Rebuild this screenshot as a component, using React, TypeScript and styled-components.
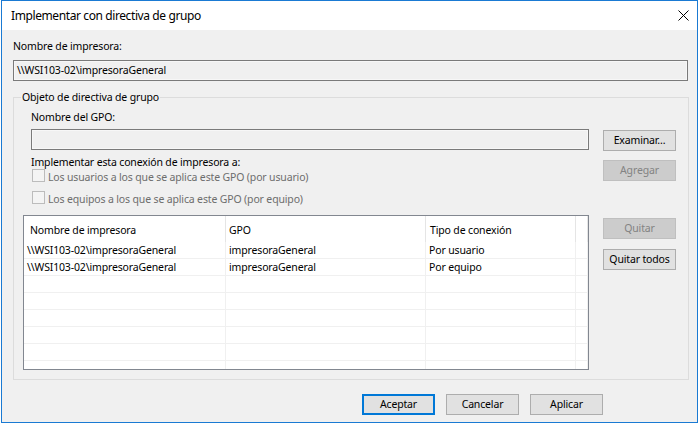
import React from "react"
import styled, { createGlobalStyle, css } from "styled-components"

const GlobalStyle = createGlobalStyle`
  html, body {
    margin: 0;
    padding: 0;
    background: #fff;
  }
  body {
    font-family: "Segoe UI", "Noto Sans", sans-serif;
    font-size: 10.5px;
    letter-spacing: -0.15px;
    color: #000;
  }
`

const Window = styled.div`
  margin-left: 1px;
  width: 697px;
  height: 423px;
  box-sizing: border-box;
  border: 1px solid #1a7ad3;
  background: #f0f0f0;
  display: flex;
  flex-direction: column;
`

const TitleBar = styled.div`
  height: 29px;
  flex: none;
  background: #fff;
  display: flex;
  align-items: center;
  justify-content: space-between;
  padding: 0 8px 0 9px;
  line-height: 15px;
`

const Title = styled.span`
  font-size: 12px;
  letter-spacing: -0.4px;
`

const Body = styled.div`
  flex: 1;
  display: flex;
  flex-direction: column;
  padding: 9px 0 0 11px;
`

const Label = styled.div<{ $indent?: number }>`
  line-height: 15px;
  padding-left: ${p => p.$indent ?? 0}px;
  white-space: nowrap;
`

const TextBox = styled.div<{ $width: number; $top: number; $indent?: number }>`
  width: ${p => p.$width}px;
  height: 21px;
  margin-top: ${p => p.$top}px;
  margin-left: ${p => p.$indent ?? 0}px;
  box-sizing: border-box;
  border: 1px solid #7a7a7a;
  box-shadow: inset 0 0 0 1px #f7f7f7;
  background: #f0f0f0;
  line-height: 18px;
  padding-left: 3px;
  white-space: nowrap;
`

const Group = styled.fieldset`
  margin: 9px 0 0;
  width: 676px;
  min-width: 0;
  box-sizing: border-box;
  border: 1px solid #dcdcdc;
  padding: 5px 11px 9px 9px;
`

const Legend = styled.legend`
  padding: 0 1px;
  margin-left: -2px;
  line-height: 15px;
`

const GroupGrid = styled.div`
  display: grid;
  grid-template-columns: 566px 74px;
  column-gap: 14px;
  align-items: start;
`

const SideButtons = styled.div`
  display: flex;
  flex-direction: column;
  align-items: flex-start;
`

const buttonKinds = {
  normal: css`
    background: #e1e1e1;
    border: 1px solid #adadad;
    color: #000;
  `,
  default: css`
    background: #e1e1e1;
    border: 2px solid #0078d7;
    color: #000;
  `,
  disabled: css`
    background: #cccccc;
    border: 1px solid #bfbfbf;
    color: #838383;
  `,
}

const Button = styled.button<{ $kind?: keyof typeof buttonKinds; $top?: number }>`
  width: 73px;
  height: 21px;
  margin-top: ${p => p.$top ?? 0}px;
  box-sizing: border-box;
  padding: 0;
  font: inherit;
  letter-spacing: inherit;
  line-height: 15px;
  white-space: nowrap;
  ${p => buttonKinds[p.$kind ?? "normal"]}
`

const Options = styled.div`
  margin-top: 4px;
  display: flex;
  flex-direction: column;
`

const CheckList = styled.div`
  padding-left: 9px;
  display: flex;
  flex-direction: column;
  gap: 7px;
`

const CheckRow = styled.label`
  display: flex;
  align-items: flex-start;
  gap: 3px;
  line-height: 15px;
  color: #6d6d6d;
  white-space: nowrap;
`

const CheckBox = styled.span`
  width: 13px;
  height: 13px;
  margin-top: -1px;
  box-sizing: border-box;
  border: 1px solid #bcbcbc;
  background: #f4f4f4;
  flex: none;
`

const ListView = styled.div`
  margin-top: 8px;
  width: 566px;
  height: 155px;
  box-sizing: border-box;
  border: 1px solid #828790;
  background: #fff;
  overflow: hidden;
`

const Row = styled.div<{ $header?: boolean }>`
  display: grid;
  grid-template-columns: 202px 200px 150px 1fr;
  height: ${p => (p.$header ? 26 : 17)}px;
  box-sizing: border-box;
  border-bottom: ${p => (p.$header ? "none" : "1px solid #f0f0f0")};
`

const Cell = styled.div<{ $header?: boolean; $pad: number }>`
  border-right: 1px solid ${p => (p.$header ? "#e5e5e5" : "#f0f0f0")};
  padding: ${p => (p.$header ? 7 : 1)}px 0 0 ${p => p.$pad}px;
  line-height: 15px;
  white-space: nowrap;
  overflow: hidden;
`

const Footer = styled.div`
  margin-top: 14px;
  display: flex;
  justify-content: flex-end;
  gap: 11px;
  padding-right: 94px;
`

const CloseIcon = () => (
  <svg width="11" height="11" viewBox="0 0 11 11" style={{ display: "block" }}>
    <path d="M0.5 0.5 L10.5 10.5 M10.5 0.5 L0.5 10.5" stroke="#000" strokeWidth="1" fill="none" />
  </svg>
)

const printer = "\\\\WSI103-02\\impresoraGeneral"

const columns = [
  { title: "Nombre de impresora", head: 6, body: 3 },
  { title: "GPO", head: 3, body: 3 },
  { title: "Tipo de conexión", head: 4, body: 3 },
]

const rows = [
  [printer, "impresoraGeneral", "Por usuario"],
  [printer, "impresoraGeneral", "Por equipo"],
  ["", "", ""],
  ["", "", ""],
  ["", "", ""],
  ["", "", ""],
  ["", "", ""],
  ["", "", ""],
]

export default function App() {
  return (
    <>
      <GlobalStyle />
      <Window>
        <TitleBar>
          <Title>Implementar con directiva de grupo</Title>
          <CloseIcon />
        </TitleBar>
        <Body>
          <Label>Nombre de impresora:</Label>
          <TextBox $width={675} $top={6}>{printer}</TextBox>
          <Group>
            <Legend>Objeto de directiva de grupo</Legend>
            <GroupGrid>
              <Label $indent={8}>Nombre del GPO:</Label>
              <div />
              <TextBox $width={558} $top={4} $indent={8} />
              <Button $top={5}>Examinar...</Button>
              <Options>
                <Label $indent={8}>Implementar esta conexión de impresora a:</Label>
                <CheckList>
                  <CheckRow>
                    <CheckBox />
                    Los usuarios a los que se aplica este GPO (por usuario)
                  </CheckRow>
                  <CheckRow>
                    <CheckBox />
                    Los equipos a los que se aplica este GPO (por equipo)
                  </CheckRow>
                </CheckList>
              </Options>
              <Button $kind="disabled" $top={9}>Agregar</Button>
              <ListView>
                <Row $header>
                  {columns.map(c => (
                    <Cell key={c.title} $header $pad={c.head}>{c.title}</Cell>
                  ))}
                  <Cell $header $pad={0} />
                </Row>
                {rows.map((r, i) => (
                  <Row key={i}>
                    {r.map((v, j) => (
                      <Cell key={j} $pad={columns[j].body}>{v}</Cell>
                    ))}
                    <Cell $pad={0} />
                  </Row>
                ))}
              </ListView>
              <SideButtons>
                <Button $kind="disabled" $top={11}>Quitar</Button>
                <Button $top={10}>Quitar todos</Button>
              </SideButtons>
            </GroupGrid>
          </Group>
          <Footer>
            <Button $kind="default">Aceptar</Button>
            <Button>Cancelar</Button>
            <Button>Aplicar</Button>
          </Footer>
        </Body>
      </Window>
    </>
  )
}
